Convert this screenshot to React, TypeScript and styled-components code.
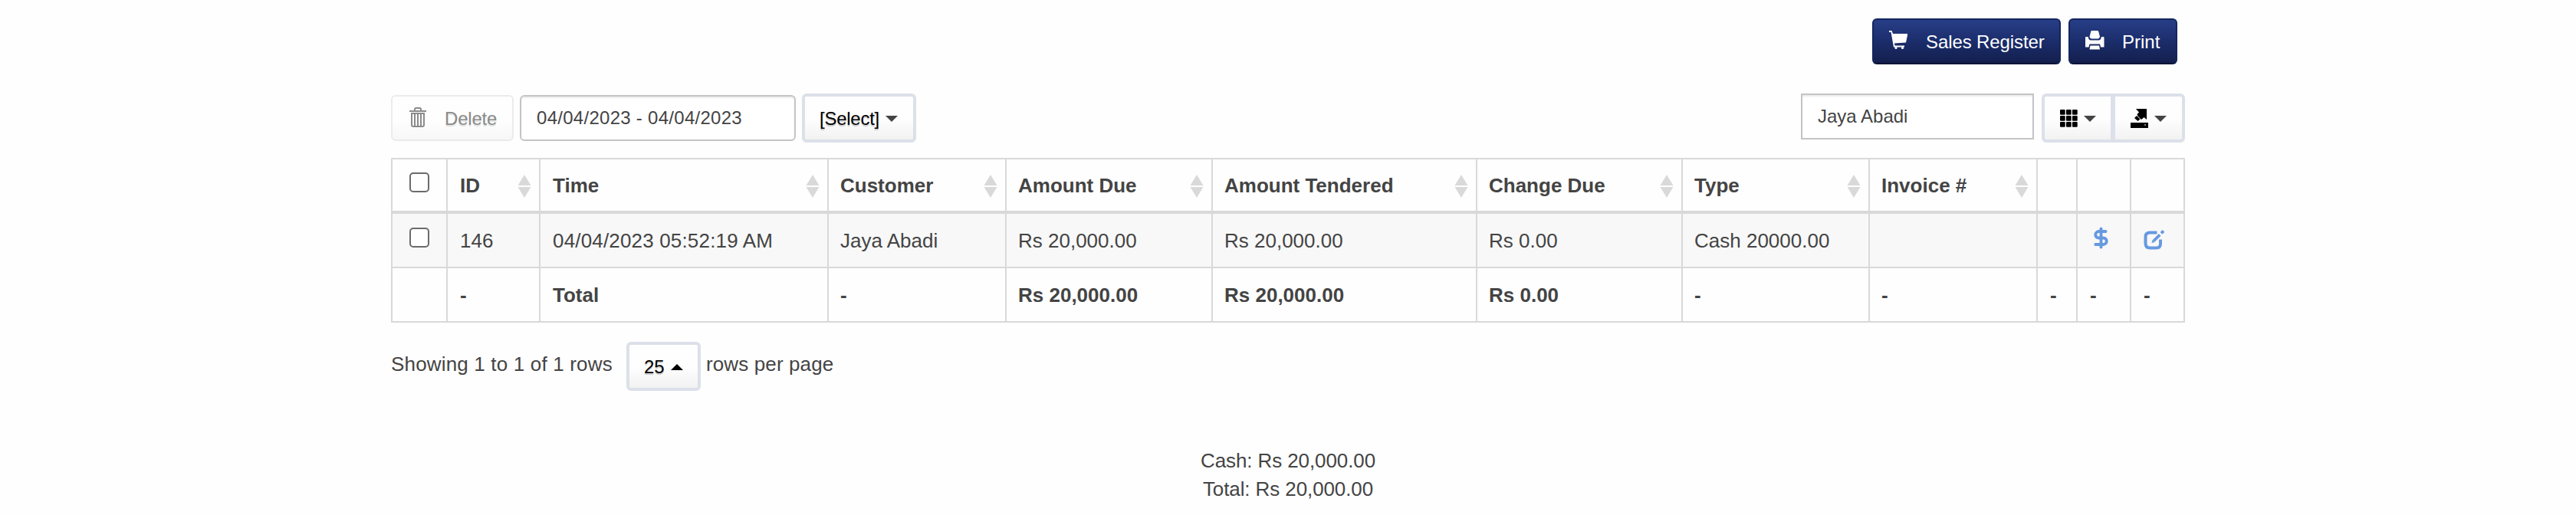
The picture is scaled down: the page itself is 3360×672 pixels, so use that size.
import React from "react";
import styled, { createGlobalStyle, css } from "styled-components";
import { DollarSign } from "lucide-react";

const Global = createGlobalStyle`
  * { box-sizing: border-box; }
  body {
    margin: 0;
    background: #fefefe;
    color: #444;
    font-family: "Liberation Sans", Arial, sans-serif;
    font-size: 26px;
    line-height: 37px;
  }
`;

const Page = styled.main`
  width: 2340px;
  height: 672px;
  margin: 0 auto;
`;

const TitleBar = styled.div`
  display: flex;
  justify-content: flex-end;
  gap: 10px;
  padding: 24px 10px 0 0;
`;

const PrimaryButton = styled.button<{ $width: number }>`
  display: flex;
  align-items: center;
  gap: 23px;
  width: ${(p) => p.$width}px;
  height: 60px;
  padding: 0 0 0 20px;
  border: 2px solid #15265e;
  border-bottom-color: #0b1438;
  border-radius: 6px;
  background: linear-gradient(#273e87, #1b2d6b 50%, #131f4d);
  color: #fff;
  font: inherit;
  font-size: 24px;
  white-space: nowrap;
  svg { margin-bottom: 3px; }
`;

const Label = styled.span<{ $spacing?: number }>`
  letter-spacing: ${(p) => p.$spacing ?? 0}px;
  white-space: nowrap;
`;

const Toolbar = styled.div`
  display: flex;
  justify-content: space-between;
  height: 84px;
  margin-top: 38px;
`;

const ToolGroup = styled.div`
  display: flex;
  align-items: flex-start;
`;

const DeleteButton = styled.button`
  display: flex;
  align-items: center;
  gap: 24px;
  width: 160px;
  height: 60px;
  margin: 2px 8px 0 0;
  padding: 0 0 0 22px;
  border: 2px solid #ebebeb;
  border-radius: 6px;
  background: linear-gradient(#fefefe 55%, #f7f7f7);
  color: #8b8b8b;
  font: inherit;
  font-size: 24px;
  text-shadow: 0 2px 1px rgba(0, 0, 0, 0.12);
  svg { margin-bottom: 3px; }
`;

const Field = styled.input<{ $width: number; $rounded?: boolean }>`
  width: ${(p) => p.$width}px;
  height: 60px;
  margin-top: ${(p) => (p.$rounded ? 2 : 0)}px;
  padding: 0 20px 1px;
  border: 2px solid #c4c4c4;
  border-radius: ${(p) => (p.$rounded ? 6 : 0)}px;
  background: #fff;
  box-shadow: inset 0 2px 2px rgba(0, 0, 0, 0.08);
  color: #444;
  font: inherit;
  font-size: 24px;
  letter-spacing: ${(p) => (p.$rounded ? 0.28 : 0)}px;
  outline: none;
`;

const menuButton = css`
  display: flex;
  align-items: center;
  height: 64px;
  border: 4px solid #dce0e9;
  border-radius: 6px;
  background: linear-gradient(#fefefe 50%, #f2f2f2);
  color: #000;
  font: inherit;
  font-size: 24px;
  text-shadow: 0 2px 1px rgba(0, 0, 0, 0.2);
`;

const MenuButton = styled.button<{ $width: number; $left?: number }>`
  ${menuButton}
  width: ${(p) => p.$width}px;
  margin-left: ${(p) => p.$left ?? 0}px;
  padding: 0 0 0 19px;
  gap: 8px;
`;

const IconGroup = styled.div`
  display: flex;
  margin-left: 10px;
`;

const IconButton = styled.button<{ $side: "left" | "right" }>`
  ${menuButton}
  width: ${(p) => (p.$side === "left" ? 94 : 97)}px;
  padding: 0 0 0 20px;
  gap: 8px;
  ${(p) =>
    p.$side === "left"
      ? "border-radius: 6px 0 0 6px;"
      : "border-radius: 0 6px 6px 0; margin-left: -4px; border-left-width: 6px;"}
`;

const Caret = styled.span<{ $up?: boolean }>`
  width: 0;
  margin-top: 2px;
  border: 8px solid transparent;
  ${(p) =>
    p.$up
      ? "border-bottom-color: #000; border-top-width: 0;"
      : "border-top-color: #444; border-bottom-width: 0;"}
`;

const Table = styled.div`
  border: 2px solid #d9d9d9;
  border-bottom: 0;
`;

const Cell = styled.div`
  display: flex;
  align-items: center;
  justify-content: space-between;
  padding: 2px 10px 0 16px;
  border-right: 2px solid #d9d9d9;
  white-space: nowrap;
  &:last-child { border-right: 0; }
`;

const Row = styled.div<{ $kind: "head" | "body" | "total" }>`
  display: grid;
  grid-template-columns: 72px 121px 376px 232px 269px 345px 268px 244px 219px 52px 70px 68px;
  height: 71px;
  border-bottom: ${(p) => (p.$kind === "head" ? 4 : 2)}px solid #d9d9d9;
  background: ${(p) => (p.$kind === "body" ? "#f8f8f8" : "transparent")};
  font-weight: ${(p) => (p.$kind === "body" ? 400 : 700)};
  ${Cell}:nth-child(n + 4):nth-child(-n + 9) { padding-left: 15px; }
`;

const CheckCell = styled(Cell)<{ $top: number }>`
  align-items: flex-start;
  padding: ${(p) => p.$top}px 0 0 22px;
`;

const IconCell = styled(Cell)<{ $left: number; $top: number }>`
  align-items: flex-start;
  justify-content: flex-start;
  padding: ${(p) => p.$top}px 0 0 ${(p) => p.$left}px;
  color: #6699e0;
`;

const Check = styled.input.attrs({ type: "checkbox" })`
  appearance: none;
  width: 26px;
  height: 26px;
  margin: 0;
  border: 2px solid #6b6b6b;
  border-radius: 5px;
  background: #fff;
`;

const Paging = styled.div`
  display: flex;
  margin-top: 25px;
  height: 64px;
`;

const PagingText = styled.span<{ $spacing: number; $width?: number; $left?: number }>`
  width: ${(p) => (p.$width ? p.$width + "px" : "auto")};
  margin-left: ${(p) => p.$left ?? 0}px;
  padding-top: 11px;
  letter-spacing: ${(p) => p.$spacing}px;
  white-space: nowrap;
`;

const Summary = styled.div`
  margin-top: 73px;
  letter-spacing: -0.1px;
  text-align: center;
`;

const SortIcon = () => (
  <svg width="18" height="30" viewBox="0 0 18 30" fill="#d9d9d9">
    <path d="M9 0L17.5 14H.5zM.5 16H17.5L9 30z" />
  </svg>
);

const CartIcon = () => (
  <svg width="25" height="25" viewBox="0 0 25 25" fill="#fff">
    <path d="M0 0H3.500L5 4H24V6L22 15.500L7 16.500L7.500 19.500H20V21.500H6L2.500 2H0z" />
    <circle cx="9" cy="22.500" r="1.600" />
    <circle cx="17.500" cy="22.500" r="1.600" />
  </svg>
);

const PrintIcon = () => (
  <svg width="25" height="25" viewBox="0 0 25 25" fill="#fff">
    <path d="M8 0H16Q17 0 17.500 2L19 8Q18 10.500 16.500 10.500H8Q6.500 10.500 5.500 8L7 2Q7.500 0 8 0Z" />
    <path d="M0 9Q0 8 1 8H3.500Q4.500 12.500 7 12.500H17.500Q20 12.500 21 8H23Q24.500 8 24.500 9V21.500H20L19 17.500H5.500L4.500 21.500H0Z" />
    <path d="M6.500 19.500H18L19 24.500H5.500Z" />
  </svg>
);

const TrashIcon = () => (
  <svg width="22" height="26" viewBox="0 0 22 26" fill="none" stroke="#8b8b8b" strokeWidth="2">
    <path d="M0 5H22M7 5V2.500Q7 1 8.500 1H13.500Q15 1 15 2.500V5M3 8H19V23Q19 25 17 25H5Q3 25 3 23ZM7 8V24M11 8V24M15 8V24" />
  </svg>
);

const GridIcon = () => (
  <svg width="23" height="23" viewBox="0 0 23 23">
    {[0, 8, 16].map((y) => [0, 8, 16].map((x) => <rect key={x + "-" + y} x={x} y={y} width="6.700" height="6.700" rx="1" />))}
  </svg>
);

const ExportIcon = () => (
  <svg width="23" height="25" viewBox="0 0 23 25">
    <path d="M7 0H21V14L17.500 11L14 14L9.500 9.500L8.500 7L11 4.500ZM8 9L12.500 13.500L9.500 16L5 12Z" />
    <path fillRule="evenodd" d="M0 18H23V25H0zM18 20.500v1h2v-1z" />
  </svg>
);

const EditIcon = () => (
  <svg width="28" height="26" viewBox="0 0 28 26" fill="none" stroke="currentColor">
    <path strokeWidth="4" d="M17.500 3.500H8Q2.500 3.500 2.500 9V17.500Q2.500 23.500 8.500 23.500H16.500Q22 23.500 22 18V12.500" />
    <path strokeWidth="3.800" d="M13 14.500L21.200 6.300M23 4.300L26 1.300" />
    <path fill="currentColor" stroke="none" d="M11.500 13L14.500 16L10.500 17Z" />
  </svg>
);

const headings = ["ID", "Time", "Customer", "Amount Due", "Amount Tendered", "Change Due", "Type", "Invoice #"];
const sale = ["146", "04/04/2023 05:52:19 AM", "Jaya Abadi", "Rs 20,000.00", "Rs 20,000.00", "Rs 0.00", "Cash 20000.00", "", ""];
const totals = ["", "-", "Total", "-", "Rs 20,000.00", "Rs 20,000.00", "Rs 0.00", "-", "-", "-", "-", "-"];

export default function App() {
  return (
    <>
      <Global />
      <Page>
        <TitleBar>
          <PrimaryButton $width={246}>
            <CartIcon />
            <Label $spacing={-0.1}>Sales Register</Label>
          </PrimaryButton>
          <PrimaryButton $width={142}>
            <PrintIcon />
            <Label>Print</Label>
          </PrimaryButton>
        </TitleBar>
        <Toolbar>
          <ToolGroup>
            <DeleteButton>
              <TrashIcon />
              <Label $spacing={-0.2}>Delete</Label>
            </DeleteButton>
            <Field $width={360} $rounded defaultValue="04/04/2023 - 04/04/2023" />
            <MenuButton $width={149} $left={8}>
              <Label $spacing={-0.25}>[Select]</Label>
              <Caret />
            </MenuButton>
          </ToolGroup>
          <ToolGroup>
            <Field $width={304} defaultValue="Jaya Abadi" />
            <IconGroup>
              <IconButton $side="left">
                <GridIcon />
                <Caret />
              </IconButton>
              <IconButton $side="right">
                <ExportIcon />
                <Caret />
              </IconButton>
            </IconGroup>
          </ToolGroup>
        </Toolbar>
        <Table>
          <Row $kind="head">
            <CheckCell $top={17}><Check /></CheckCell>
            {headings.map((text) => (
              <Cell key={text}>
                <Label>{text}</Label>
                <SortIcon />
              </Cell>
            ))}
            <Cell />
            <Cell />
            <Cell />
          </Row>
          <Row $kind="body">
            <CheckCell $top={18}><Check /></CheckCell>
            {sale.map((text, i) => (
              <Cell key={i}>
                <Label $spacing={i === 1 ? 0.17 : 0}>{text}</Label>
              </Cell>
            ))}
            <IconCell $left={16} $top={17}>
              <DollarSign size={29} strokeWidth={3.2} />
            </IconCell>
            <IconCell $left={16} $top={21}><EditIcon /></IconCell>
          </Row>
          <Row $kind="total">
            {totals.map((text, i) => <Cell key={i}>{text}</Cell>)}
          </Row>
        </Table>
        <Paging>
          <PagingText $spacing={0.17} $width={307}>Showing 1 to 1 of 1 rows</PagingText>
          <MenuButton $width={97}>
            <Label>25</Label>
            <Caret $up />
          </MenuButton>
          <PagingText $spacing={0.12} $left={7}>rows per page</PagingText>
        </Paging>
        <Summary>
          <div>Cash: Rs 20,000.00</div>
          <div>Total: Rs 20,000.00</div>
        </Summary>
      </Page>
    </>
  );
}
